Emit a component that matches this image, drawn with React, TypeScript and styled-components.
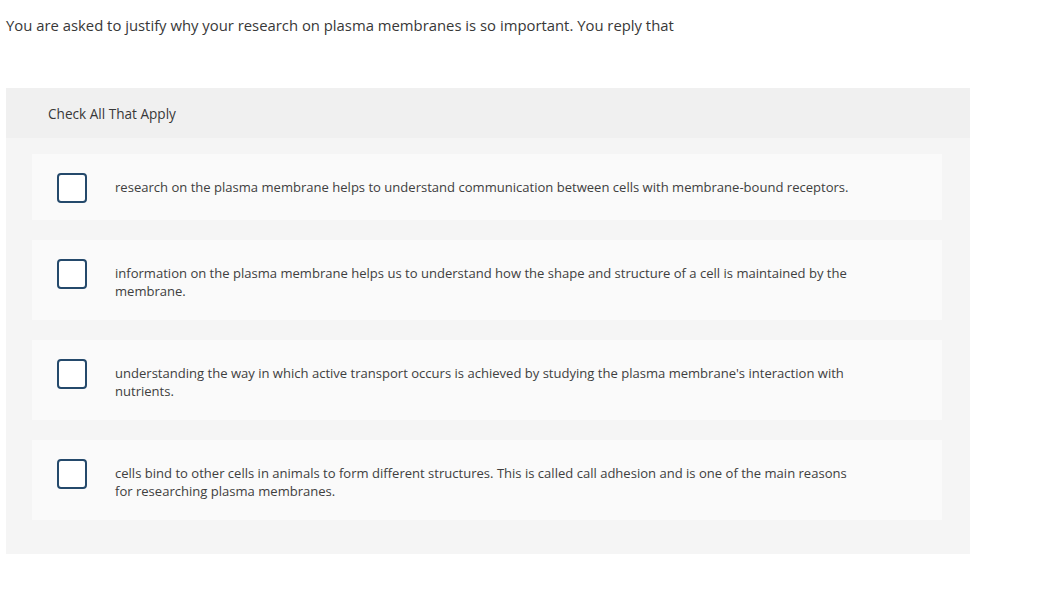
import React from "react";
import styled, { createGlobalStyle } from "styled-components";

const Global = createGlobalStyle`
  html, body { margin: 0; padding: 0; background: #ffffff; }
  body { font-family: "Open Sans", "Liberation Sans", sans-serif; }
`;

const Page = styled.div`
  padding: 14px 70px 0 6px;
  width: 1040px;
  box-sizing: border-box;
`;

const Prompt = styled.p`
  margin: 0;
  font-size: 14.85px;
  line-height: 22px;
  color: #383838;
`;

const Panel = styled.section`
  margin-top: 52px;
  width: 964px;
  background: #f5f5f5;
`;

const PanelHeader = styled.div`
  height: 50px;
  display: flex;
  align-items: center;
  padding-left: 42px;
  background: #f0f0f0;
  font-size: 13.6px;
  color: #383838;
`;

const Options = styled.div`
  display: flex;
  flex-direction: column;
  gap: 20px;
  padding: 16px 28px 34px 26px;
`;

const Option = styled.label<{ $tall?: boolean }>`
  display: flex;
  align-items: flex-start;
  gap: 28px;
  min-height: ${(p) => (p.$tall ? 80 : 66)}px;
  box-sizing: border-box;
  padding: 19px 24px 0 25px;
  background: #fafafa;
  cursor: pointer;
`;

const Box = styled.span`
  flex: none;
  width: 30px;
  height: 30px;
  box-sizing: border-box;
  border: 2px solid #24496b;
  border-radius: 4px;
  background: #ffffff;
`;

const OptionText = styled.span`
  margin-top: 5px;
  font-size: 13.05px;
  line-height: 18px;
  color: #404040;
  max-width: 740px;
`;

const options = [
  "research on the plasma membrane helps to understand communication between cells with membrane-bound receptors.",
  "information on the plasma membrane helps us to understand how the shape and structure of a cell is maintained by the membrane.",
  "understanding the way in which active transport occurs is achieved by studying the plasma membrane's interaction with nutrients.",
  "cells bind to other cells in animals to form different structures. This is called call adhesion and is one of the main reasons for researching plasma membranes.",
];

export default function App() {
  return (
    <>
      <Global />
      <Page>
        <Prompt>
          You are asked to justify why your research on plasma membranes is so important. You reply that
        </Prompt>
        <Panel>
          <PanelHeader>Check All That Apply</PanelHeader>
          <Options>
            {options.map((t, i) => (
              <Option key={i} $tall={i > 0}>
                <Box />
                <OptionText>{t}</OptionText>
              </Option>
            ))}
          </Options>
        </Panel>
      </Page>
    </>
  );
}
